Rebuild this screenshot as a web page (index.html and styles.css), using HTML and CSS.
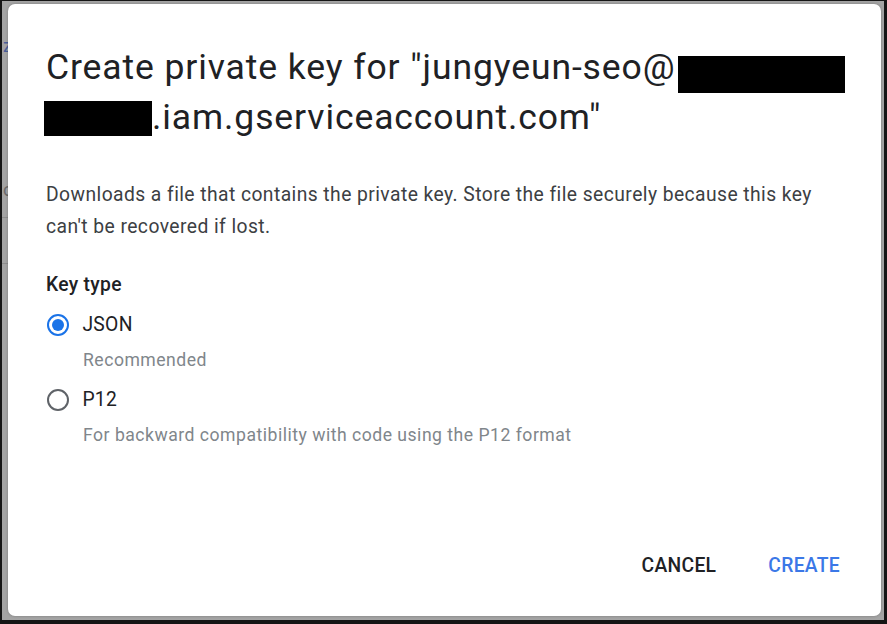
FILE: index.html
```html
<!DOCTYPE html>
<html>
<head>
<meta charset="utf-8">
<link rel="stylesheet" href="styles.css">
</head>
<body>
<div class="frame">
  <div class="backdrop">
    <div class="ghost ghost-z">z</div>
    <div class="ghost ghost-c">c</div>
    <div class="ghost-line gl1"></div>
    <div class="ghost-line gl2"></div>
  </div>
  <div class="dialog">
    <h1 class="title">Create private key for "jungyeun-seo@<span class="redact r1"></span><br><span class="redact r2"></span>.iam.gserviceaccount.com"</h1>
    <p class="desc">Downloads a file that contains the private key. Store the file securely because this key can't be recovered if lost.</p>
    <div class="label">Key type</div>
    <div class="options">
      <div class="option">
        <div class="opt-row"><span class="radio checked"></span><span class="opt-name">JSON</span></div>
        <div class="opt-hint">Recommended</div>
      </div>
      <div class="option">
        <div class="opt-row"><span class="radio"></span><span class="opt-name">P12</span></div>
        <div class="opt-hint">For backward compatibility with code using the P12 format</div>
      </div>
    </div>
    <div class="actions">
      <span class="btn cancel">CANCEL</span>
      <span class="btn create">CREATE</span>
    </div>
  </div>
</div>
</body>
</html>
```

FILE: styles.css
```css
html, body {
  margin: 0;
  padding: 0;
  background: #111;
}
.frame {
  position: relative;
  width: 887px;
  height: 624px;
  box-sizing: border-box;
  border-style: solid;
  border-color: #151515;
  border-width: 1px 3px 4px 2px;
  background: #a4a4a4;
  padding: 3px 3px 4px 6px;
  display: flex;
  font-family: Roboto, "Liberation Sans", sans-serif;
}
.backdrop {
  position: absolute;
  inset: 0;
  overflow: hidden;
}
.ghost {
  position: absolute;
  left: 1px;
  font-size: 18px;
  color: #5c6b8f;
}
.ghost-z { top: 34px; color: #4a5e9a; }
.ghost-c { top: 178px; color: #6a6a6a; }
.ghost-line {
  position: absolute;
  left: 0;
  width: 8px;
  height: 1px;
  background: #8e8e8e;
}
.gl1 { top: 216px; }
.gl2 { top: 262px; }
.dialog {
  position: relative;
  flex: 1;
  background: #fff;
  border-radius: 7px;
  box-shadow: 0 0 3px rgba(0,0,0,0.25);
  padding: 39px 33px 0 38px;
  display: flex;
  flex-direction: column;
}
.title {
  margin: 0;
  font-weight: 400;
  font-size: 35.5px;
  line-height: 48px;
  color: #202124;
  letter-spacing: 0.9px;
}
.redact {
  display: inline-block;
  background: #000;
  vertical-align: top;
}
.r1 { width: 167px; height: 37px; margin-top: 13px; margin-left: 3px; }
.r2 { width: 108px; height: 35px; margin-top: 8px; margin-left: -2px; }
.desc {
  margin: 38px 0 0;
  font-size: 19.3px;
  line-height: 32px;
  letter-spacing: 0.43px;
  color: #3c4043;
  max-width: 790px;
}
.label {
  margin-top: 29px;
  font-size: 19.3px;
  font-weight: 500;
  letter-spacing: 0.3px;
  line-height: 26px;
  color: #202124;
}
.options {
  display: flex;
  flex-direction: column;
  gap: 15px;
  margin-top: 14px;
}
.opt-row {
  display: flex;
  align-items: center;
  gap: 13px;
  height: 26px;
}
.radio {
  width: 18.4px;
  height: 18.4px;
  margin-left: 1px;
  border: 2.8px solid #5f6368;
  border-radius: 50%;
  box-sizing: content-box;
  position: relative;
}
.radio.checked {
  border-color: #1a73e8;
}
.radio.checked::after {
  content: "";
  position: absolute;
  left: 50%;
  top: 50%;
  width: 12.5px;
  height: 12.5px;
  margin: -6.25px 0 0 -6.25px;
  border-radius: 50%;
  background: #1a73e8;
}
.opt-name {
  font-size: 19.3px;
  letter-spacing: 0.3px;
  color: #202124;
  line-height: 26px;
}
.opt-hint {
  margin-left: 37px;
  margin-top: 10px;
  font-size: 17.6px;
  letter-spacing: 0.5px;
  line-height: 24px;
  color: #80868b;
}
.actions {
  margin-top: auto;
  margin-bottom: 37px;
  display: flex;
  justify-content: flex-end;
  gap: 52px;
  padding-right: 8px;
}
.btn {
  font-size: 19.3px;
  font-weight: 500;
  letter-spacing: 0.3px;
  line-height: 26px;
}
.cancel { color: #202124; }
.create { color: #3b78e7; }
```
